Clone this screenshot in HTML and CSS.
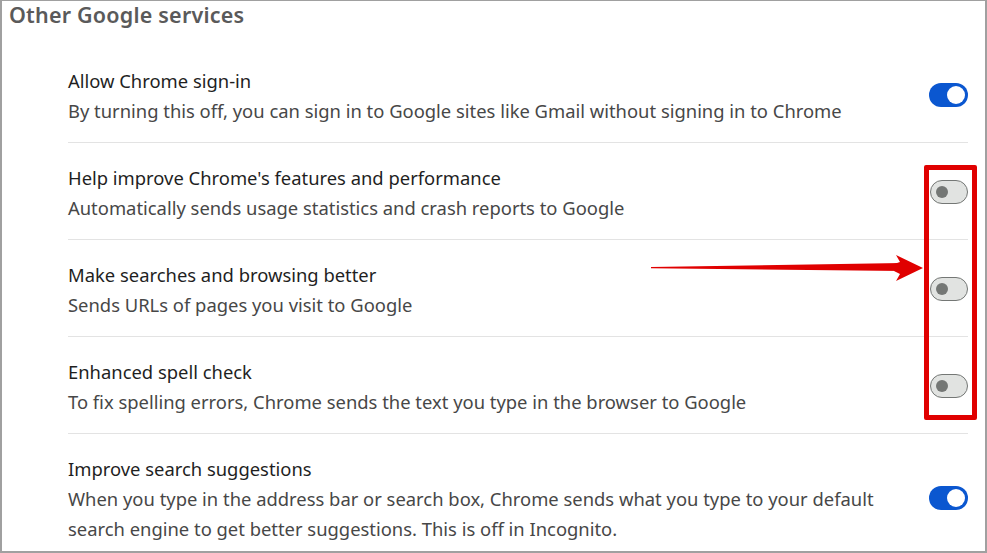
FILE: index.html
```html
<!DOCTYPE html>
<html>
<head>
<meta charset="utf-8">
<link rel="stylesheet" href="styles.css">
</head>
<body>
<div class="frame">
  <h2 class="heading">Other Google services</h2>
  <div class="list">
    <div class="row">
      <div class="text">
        <div class="title">Allow Chrome sign-in</div>
        <div class="desc">By turning this off, you can sign in to Google sites like Gmail without signing in to Chrome</div>
      </div>
      <span class="toggle on"><span class="knob"></span></span>
    </div>
    <div class="row">
      <div class="text">
        <div class="title">Help improve Chrome's features and performance</div>
        <div class="desc">Automatically sends usage statistics and crash reports to Google</div>
      </div>
      <span class="toggle off"><span class="knob"></span></span>
    </div>
    <div class="row">
      <div class="text">
        <div class="title">Make searches and browsing better</div>
        <div class="desc">Sends URLs of pages you visit to Google</div>
      </div>
      <span class="toggle off"><span class="knob"></span></span>
    </div>
    <div class="row">
      <div class="text">
        <div class="title">Enhanced spell check</div>
        <div class="desc">To fix spelling errors, Chrome sends the text you type in the browser to Google</div>
      </div>
      <span class="toggle off"><span class="knob"></span></span>
    </div>
    <div class="row last">
      <div class="text">
        <div class="title">Improve search suggestions</div>
        <div class="desc">When you type in the address bar or search box, Chrome sends what you type to your default search engine to get better suggestions. This is off in Incognito.</div>
      </div>
      <span class="toggle on"><span class="knob"></span></span>
    </div>
  </div>
  <div class="redbox"></div>
  <svg class="arrow" width="280" height="32" viewBox="0 0 280 32">
    <path d="M1 15 L252 11 L252 19 L1 16.2 Z" fill="#e00000"/>
    <path d="M246 3 L273 16 L246 29 L250 22 L244 19 L244 12 L250 10 Z" fill="#e00000"/>
  </svg>
</div>
</body>
</html>
```
FILE: styles.css
```css
html, body {
  margin: 0;
  padding: 0;
  background: #ffffff;
}
.frame {
  position: relative;
  width: 987px;
  height: 553px;
  box-sizing: border-box;
  border: 2px solid #a0a0a0;
  border-top-width: 1px;
  border-left-width: 2px;
  overflow: hidden;
  font-family: "Noto Sans", "Open Sans", sans-serif;
}
.heading {
  margin: 0;
  padding: 0 0 0 7px;
  height: 45px;
  box-sizing: border-box;
  font-size: 21.5px;
  font-weight: 600;
  letter-spacing: 0.2px;
  color: #5a5a5a;
  line-height: 28px;
}
.list {
  padding: 0 17px 0 66px;
}
.row {
  display: flex;
  align-items: center;
  justify-content: space-between;
  padding: 20px 0 16px 0;
  border-bottom: 1px solid #e3e3e3;
}
.row.last {
  border-bottom: none;
}
.text {
  flex: 1;
  padding-right: 40px;
}
.title {
  font-size: 18.4px;
  line-height: 30px;
  color: #1f1f1f;
}
.desc {
  font-size: 18.4px;
  line-height: 30px;
  color: #474747;
}
.toggle {
  position: relative;
  flex: none;
  width: 39px;
  height: 24px;
  border-radius: 12px;
  box-sizing: border-box;
  margin-bottom: 2px;
}
.toggle.on {
  background: #0b57d0;
}
.toggle.on .knob {
  position: absolute;
  right: 3px;
  top: 3px;
  width: 18px;
  height: 18px;
  border-radius: 50%;
  background: #ffffff;
}
.toggle.off {
  width: 38px;
  background: #e1e3e1;
  border: 1px solid #747775;
}
.toggle.off .knob {
  position: absolute;
  left: 5px;
  top: 5px;
  width: 12px;
  height: 12px;
  border-radius: 50%;
  background: #747775;
}
.redbox {
  position: absolute;
  left: 922px;
  top: 164px;
  width: 53px;
  height: 255px;
  box-sizing: border-box;
  border: 5px solid #e00000;
  border-radius: 2px;
}
.arrow {
  position: absolute;
  left: 648px;
  top: 251px;
}
```
